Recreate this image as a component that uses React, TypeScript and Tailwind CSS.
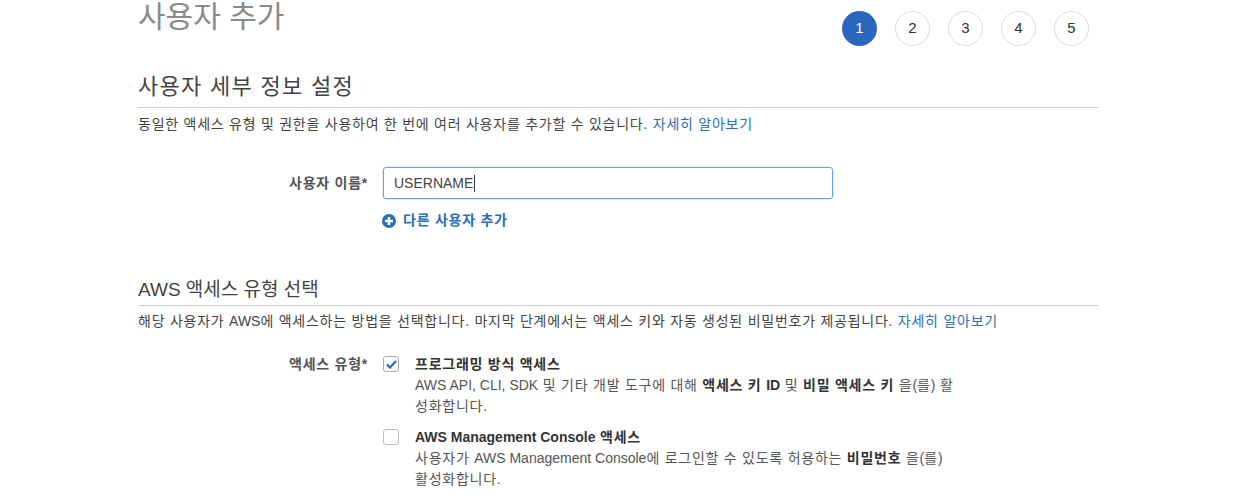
import React from 'react';

const font = { fontFamily: '"Liberation Sans", "Noto Sans CJK KR", sans-serif' };

const steps = [1, 2, 3, 4, 5];

// Latin runs keep normal spacing; Hangul gets widened to match the reference face
const En = ({ children }: { children: React.ReactNode }) => (
  <span className="tracking-normal">{children}</span>
);

const App = () => {
  return (
    <div className="w-[1236px] h-[500px] overflow-hidden bg-white text-[#444]" style={font}>
      <div className="w-[960px] mx-auto">
        {/* header */}
        <div className="flex items-start justify-between -mt-[6px]">
          <h1 className="text-[30px] leading-[46px] text-[#8a8a8a] font-normal">사용자 추가</h1>
          <div className="flex gap-[18px] mt-[17px] mr-[9px]">
            {steps.map((s) => (
              <div
                key={s}
                className={
                  s === 1
                    ? "w-[35px] h-[35px] rounded-full bg-[#2a66bd] text-white flex items-center justify-center text-[15px]"
                    : "w-[35px] h-[35px] rounded-full border border-[#dcdcdc] text-[#333] flex items-center justify-center text-[15px]"
                }
              >
                {s}
              </div>
            ))}
          </div>
        </div>

        {/* section 1 */}
        <h2 className="mt-[27px] text-[22px] leading-[28px] text-[#444] font-normal tracking-[1.3px]">사용자 세부 정보 설정</h2>
        <div className="mt-[6px] border-t border-[#cccccc]" />
        <p className="mt-[6px] text-[14px] leading-[20px] text-[#444] tracking-[0.75px]">
          동일한 액세스 유형 및 권한을 사용하여 한 번에 여러 사용자를 추가할 수 있습니다.{' '}
          <a className="text-[#2a6ebb]">자세히 알아보기</a>
        </p>

        <div className="mt-[33px] flex items-center">
          <label className="w-[230px] text-right text-[14px] font-bold text-[#545454] tracking-[0.75px]">사용자 이름*</label>
          <div className="ml-[15px]">
            <div className="w-[450px] h-[32px] border border-[#6aa6e0] rounded-[3px] shadow-[0_0_2px_#9cc3ea] flex items-center px-[10px] text-[14px] text-[#444]">
              USERNAME<span className="w-px h-[17px] bg-[#333] ml-[1px]" />
            </div>
          </div>
        </div>
        <div className="mt-[11px] ml-[244px] flex items-center gap-[7px] text-[14px] font-bold text-[#2a6ebb] tracking-[0.75px]">
          <svg width="14" height="14" viewBox="0 0 14 14">
            <circle cx="7" cy="7" r="7" fill="#2a6ebb" />
            <rect x="3" y="5.75" width="8" height="2.5" fill="white" />
            <rect x="5.75" y="3" width="2.5" height="8" fill="white" />
          </svg>
          다른 사용자 추가
        </div>

        {/* section 2 */}
        <h2 className="mt-[46px] text-[19px] leading-[26px] text-[#444] font-normal">AWS 액세스 유형 선택</h2>
        <div className="mt-[2px] border-t border-[#cccccc]" />
        <p className="mt-[5px] text-[14px] leading-[20px] text-[#444] tracking-[0.75px]">
          해당 사용자가 <En>AWS</En>에 액세스하는 방법을 선택합니다. 마지막 단계에서는 액세스 키와 자동 생성된 비밀번호가 제공됩니다.{' '}
          <a className="text-[#2a6ebb]">자세히 알아보기</a>
        </p>

        <div className="mt-[23px] flex items-start">
          <label className="w-[230px] text-right text-[14px] leading-[20px] font-bold text-[#545454] tracking-[0.75px]">액세스 유형*</label>
          <div className="ml-[15px] flex flex-col gap-[10px]">
            <div className="flex items-start">
              <div className="mt-[2px] w-[16px] h-[16px] rounded-[3px] border border-[#aaa] flex items-center justify-center">
                <svg width="11" height="9" viewBox="0 0 11 9">
                  <path d="M1 4.5 L4 7.5 L10 1" fill="none" stroke="#2a66bd" strokeWidth="2.2" />
                </svg>
              </div>
              <div className="ml-[16px] w-[570px] text-[14px] leading-[21px] tracking-[0.75px]">
                <div className="font-bold text-[#333]">프로그래밍 방식 액세스</div>
                <div className="text-[#555]">
                  <En>AWS API, CLI, SDK</En> 및 기타 개발 도구에 대해 <b className="text-[#333]">액세스 키 <En>ID</En></b> 및{' '}
                  <b className="text-[#333]">비밀 액세스 키</b> 을<En>(</En>를<En>)</En> 활
                  <br />
                  성화합니다.
                </div>
              </div>
            </div>
            <div className="flex items-start">
              <div className="mt-[2px] w-[16px] h-[16px] rounded-[3px] border border-[#bbb]" />
              <div className="ml-[16px] w-[570px] text-[14px] leading-[21px] tracking-[0.75px]">
                <div className="font-bold text-[#333]">
                  <En>AWS Management Console</En> 액세스
                </div>
                <div className="text-[#555]">
                  사용자가 <En>AWS Management Console</En>에 로그인할 수 있도록 허용하는 <b className="text-[#333]">비밀번호</b> 을<En>(</En>를<En>)</En>
                  <br />
                  활성화합니다.
                </div>
              </div>
            </div>
          </div>
        </div>
      </div>
    </div>
  );
};

export default App;
